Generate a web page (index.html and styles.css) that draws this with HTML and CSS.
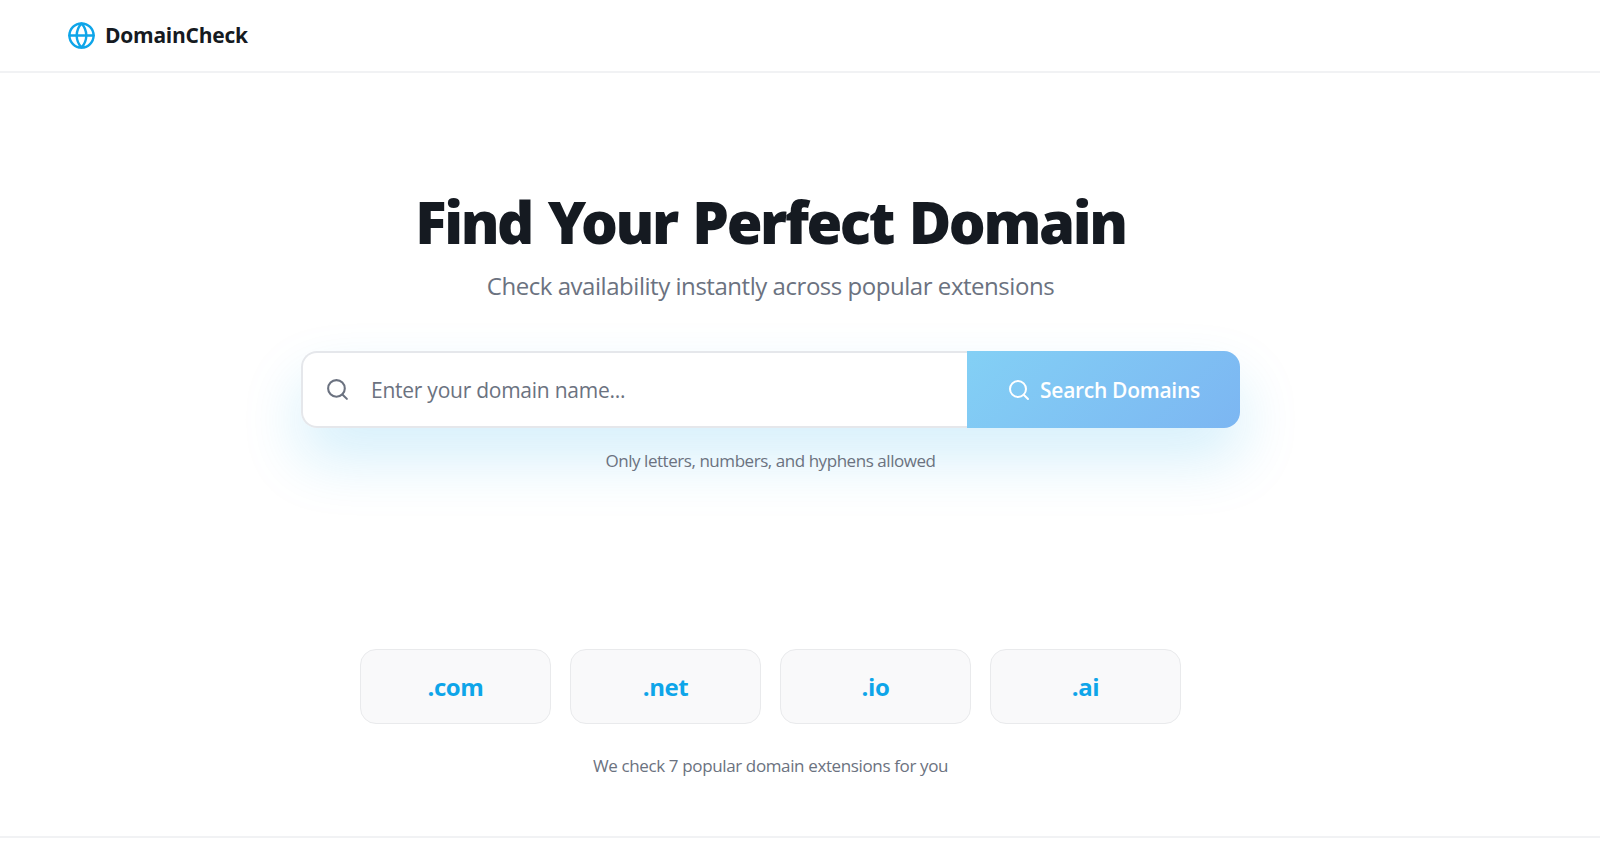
FILE: index.html
```html
<!DOCTYPE html>
<html lang="en">

<head>
    <meta charset="UTF-8">
    <meta name="viewport" content="width=device-width, initial-scale=1.0">
    <title>DomainCheck</title>
    <link rel="stylesheet" href="styles.css">
</head>

<body>
    <header class="navbar">
        <svg class="logo-icon" viewBox="0 0 24 24" fill="none" stroke="currentColor" stroke-width="2" stroke-linecap="round" stroke-linejoin="round">
            <circle cx="12" cy="12" r="10"></circle>
            <path d="M2 12h20"></path>
            <path d="M12 2a15.3 15.3 0 0 1 4 10 15.3 15.3 0 0 1-4 10 15.3 15.3 0 0 1-4-10 15.3 15.3 0 0 1 4-10z"></path>
        </svg>
        <span class="logo-text">DomainCheck</span>
    </header>

    <main class="hero">
        <h1>Find Your Perfect Domain</h1>
        <p class="subtitle">Check availability instantly across popular extensions</p>

        <form class="search-form">
            <div class="search-input">
                <svg class="search-icon" viewBox="0 0 24 24" fill="none" stroke="currentColor" stroke-width="2" stroke-linecap="round" stroke-linejoin="round">
                    <circle cx="11" cy="11" r="8"></circle>
                    <path d="m21 21-4.3-4.3"></path>
                </svg>
                <input type="text" placeholder="Enter your domain name...">
            </div>
            <button type="button" class="search-button">
                <svg class="button-icon" viewBox="0 0 24 24" fill="none" stroke="currentColor" stroke-width="2" stroke-linecap="round" stroke-linejoin="round">
                    <circle cx="11" cy="11" r="8"></circle>
                    <path d="m21 21-4.3-4.3"></path>
                </svg>
                Search Domains
            </button>
        </form>
        <p class="hint">Only letters, numbers, and hyphens allowed</p>

        <div class="extensions">
            <div class="ext-card">.com</div>
            <div class="ext-card">.net</div>
            <div class="ext-card">.io</div>
            <div class="ext-card">.ai</div>
        </div>
        <p class="ext-note">We check 7 popular domain extensions for you</p>
    </main>

    <footer class="footer"></footer>
</body>

</html>
```

FILE: styles.css
```css
* {
    box-sizing: border-box;
}

body {
    margin: 0;
    font-family: 'Open Sans', 'Noto Sans', sans-serif;
    background-color: #fff;
    color: #151a21;
    height: 853px;
    overflow: hidden;
}

.navbar {
    display: flex;
    align-items: center;
    gap: 9px;
    height: 73px;
    padding-left: 67px;
    padding-bottom: 1px;
    border-bottom: 2px solid #f1f2f4;
}

.logo-icon {
    width: 29px;
    height: 29px;
    color: #0ea5e9;
}

.logo-text {
    font-size: 21px;
    font-weight: 700;
    letter-spacing: -0.25px;
}

.hero {
    display: flex;
    flex-direction: column;
    align-items: center;
    width: 1541px;
    height: 763px;
    padding-top: 113px;
}

h1 {
    margin: 0;
    font-family: 'Noto Sans', sans-serif;
    font-size: 58px;
    line-height: 72px;
    font-weight: 900;
    letter-spacing: -2.4px;
    word-spacing: 3px;
}

.subtitle {
    margin: 12px 0 0;
    font-size: 24px;
    line-height: 32px;
    color: #6b7280;
    letter-spacing: -0.46px;
}

.search-form {
    display: flex;
    width: 939px;
    height: 77px;
    margin-top: 49px;
    border-radius: 16px;
    box-shadow: 0 30px 60px rgba(14, 165, 233, 0.18);
}

.search-input {
    flex: 1;
    display: flex;
    align-items: center;
    gap: 21px;
    padding-left: 22px;
    background-color: #fff;
    border: 2px solid #e5e7eb;
    border-right: none;
    border-radius: 16px 0 0 16px;
}

.search-icon {
    width: 25px;
    height: 25px;
    color: #6b7280;
    flex-shrink: 0;
}

.search-input input {
    flex: 1;
    padding: 0;
    border: none;
    outline: none;
    font-family: inherit;
    font-size: 21px;
    letter-spacing: -0.25px;
    background: transparent;
}

.search-input input::placeholder {
    color: #6b7280;
    opacity: 1;
}

.search-button {
    display: flex;
    align-items: center;
    justify-content: center;
    gap: 9px;
    width: 273px;
    border: none;
    border-radius: 0 16px 16px 0;
    background: linear-gradient(135deg, #83d0f5, #7cb6f2);
    color: #fff;
    font-family: inherit;
    font-size: 21px;
    font-weight: 600;
    letter-spacing: -0.3px;
    cursor: pointer;
}

.button-icon {
    width: 24px;
    height: 24px;
}

.hint {
    margin: 21px 0 0;
    font-size: 17px;
    line-height: 24px;
    color: #6b7280;
    letter-spacing: -0.45px;
}

.extensions {
    display: flex;
    gap: 19px;
    margin-top: 176px;
}

.ext-card {
    display: flex;
    align-items: center;
    justify-content: center;
    width: 191px;
    height: 75px;
    background-color: #f9f9fa;
    border: 1px solid #e9eaec;
    border-radius: 16px;
    color: #0ea5e9;
    font-size: 24px;
    font-weight: 700;
    letter-spacing: -0.4px;
}

.ext-note {
    margin: 30px 0 0;
    font-size: 17px;
    line-height: 24px;
    color: #6b7280;
    letter-spacing: -0.37px;
}

.footer {
    height: 16px;
    border-top: 2px solid #f1f2f4;
}
```
